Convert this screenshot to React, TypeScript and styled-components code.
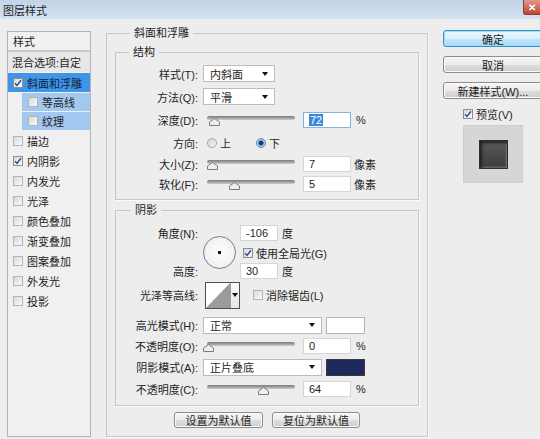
import React from 'react'
import styled, {createGlobalStyle} from 'styled-components'

const GlobalStyle = createGlobalStyle`
  html, body {
    margin: 0;
    padding: 0;
    background: #ededed;
  }
  body {
    font-family: "Liberation Sans", "Noto Sans CJK SC", sans-serif;
    font-size: 11px;
    color: #1e1e1e;
  }
  * {
    box-sizing: border-box;
  }
`

const Window = styled.div`
  width: 540px;
  height: 439px;
  overflow: hidden;
  background: #ededed;
  display: flex;
  flex-direction: column;
`
const TitleBar = styled.div`
  height: 19px;
  flex: none;
  display: flex;
  align-items: center;
  justify-content: space-between;
  padding-left: 3px;
  background: linear-gradient(#c2d4e9, #d5e2f0);
`
const CloseBtn = styled.div`
  width: 17px;
  height: 15px;
  align-self: flex-start;
  display: flex;
  align-items: center;
  justify-content: center;
  color: #fff;
  font-size: 10px;
  font-weight: bold;
  background: linear-gradient(#e0998c, #c4442f);
  border: 1px solid #8d3b30;
  border-top: none;
  border-right: none;
  border-radius: 0 0 0 3px;
`
const Body = styled.div`
  flex: 1;
  display: flex;
  align-items: flex-start;
  padding-left: 7px;
`

/* ---------- left list ---------- */
const LeftPanel = styled.div`
  width: 84px;
  height: 406px;
  margin-top: 12px;
  flex: none;
  display: flex;
  flex-direction: column;
  background: #f0f0f0;
  border: 1px solid #b3b3b3;
`
const PanelHeader = styled.div`
  height: 20px;
  padding-left: 5px;
  display: flex;
  align-items: center;
  border-bottom: 2px solid #c9c9c9;
`
const BlendRow = styled.div`
  height: 20px;
  padding-left: 4px;
  display: flex;
  align-items: center;
  background: #e8e8e8;
`
const StyleItem = styled.div<{$tone?: 'selected' | 'sub'; $h?: number}>`
  height: ${p => p.$h ?? 20}px;
  margin-top: 1px;
  margin-left: ${p => (p.$tone === 'sub' ? 14 : 0)}px;
  padding-left: ${p => (p.$tone === 'sub' ? 6 : 5)}px;
  display: flex;
  align-items: center;
  gap: 4px;
  background: ${p =>
    p.$tone === 'selected' ? '#3f95e6' : p.$tone === 'sub' ? '#a3c8f0' : 'transparent'};
  color: ${p => (p.$tone === 'selected' ? '#0f1f40' : '#1e1e1e')};
`

/* ---------- common controls ---------- */
const CheckBox = styled.span<{$faint?: boolean}>`
  width: 10px;
  height: 10px;
  flex: none;
  display: inline-flex;
  align-items: center;
  justify-content: center;
  border: 1px solid ${p => (p.$faint ? '#b5b5b5' : '#8f8f8f')};
  background: linear-gradient(135deg, #d8d8d8, #fbfbfb);
`
function Check({on, faint}: {on?: boolean; faint?: boolean}) {
  return (
    <CheckBox $faint={faint}>
      {on && (
        <svg width="8" height="8" viewBox="0 0 8 8">
          <path d="M1 4.2 L3 6.4 L7 1.2" fill="none" stroke="#2c4a8c" strokeWidth="1.4" />
        </svg>
      )}
    </CheckBox>
  )
}

const Row = styled.div<{$h: number}>`
  height: ${p => p.$h}px;
  display: flex;
  align-items: center;
`
const Label = styled.div`
  width: 82px;
  flex: none;
  text-align: right;
  white-space: nowrap;
`
const Select = styled.div<{$w: number}>`
  width: ${p => p.$w}px;
  height: 17px;
  margin-left: 5px;
  flex: none;
  display: flex;
  align-items: center;
  justify-content: space-between;
  padding: 0 6px 0 6px;
  background: #fff;
  border: 1px solid #bcbcbc;
`
const Arrow = () => (
  <svg width="6" height="4" viewBox="0 0 6 4">
    <polygon points="0,0 6,0 3,4" fill="#111" />
  </svg>
)
const Input = styled.div<{$w?: number; $ml?: number; $focus?: boolean}>`
  width: ${p => p.$w ?? 48}px;
  height: 16px;
  margin-left: ${p => p.$ml ?? 8}px;
  flex: none;
  display: flex;
  align-items: center;
  padding-left: 5px;
  background: #fff;
  border: 1px solid ${p => (p.$focus ? '#86b3e0' : '#d2d6dc')};
`
const Selected = styled.span`
  background: #3c88d8;
  color: #fff;
  padding: 0 1px;
`
const Unit = styled.span<{$ml?: number}>`
  margin-left: ${p => p.$ml ?? 5}px;
`

const SliderWrap = styled.div`
  position: relative;
  width: 88px;
  height: 14px;
  margin-left: 9px;
  flex: none;
`
const Track = styled.div`
  margin-top: 3px;
  height: 4px;
  border-radius: 2px;
  background: linear-gradient(#7a7a7a, #a8a8a8 60%, #d0d0d0);
`
const Thumb = styled.svg`
  position: absolute;
  top: 5px;
`
function Slider({pct}: {pct: number}) {
  return (
    <SliderWrap>
      <Track />
      <Thumb width="11" height="8" viewBox="0 0 11 8" style={{left: 1 + pct * 0.86 - 5.5}}>
        <polygon points="5.5,0.5 10.5,4 10.5,7.5 0.5,7.5 0.5,4" fill="#efefef" stroke="#7c7c7c" />
      </Thumb>
    </SliderWrap>
  )
}

const Radio = styled.span<{$on?: boolean}>`
  width: 10px;
  height: 10px;
  flex: none;
  border-radius: 50%;
  border: 1px solid ${p => (p.$on ? '#5a86b0' : '#a5a5a5')};
  background: ${p =>
    p.$on
      ? 'radial-gradient(circle, #163a5c 0 1.6px, #3a7fc0 2.2px, #b7d6f0 3.6px, #e8f1f8 5px)'
      : 'linear-gradient(135deg, #d4d4d4, #f7f7f7)'};
`
const RadioGroup = styled.div`
  display: flex;
  align-items: center;
  margin-left: 9px;
`
const RadioLabel = styled.span<{$gap?: number}>`
  margin-left: 3px;
  margin-right: ${p => p.$gap ?? 0}px;
`

/* ---------- group boxes ---------- */
const Middle = styled.div`
  width: 322px;
  margin-left: 15px;
  margin-top: 7px;
  flex: none;
`
const Group = styled.fieldset<{$mt?: number; $pb?: number; $px?: number}>`
  margin: ${p => p.$mt ?? 0}px 0 0 0;
  padding: 0 ${p => p.$px ?? 0}px ${p => p.$pb ?? 5}px;
  min-width: 0;
  border: 1px solid #c7c7c7;
  box-shadow: 1px 1px 0 #fafafa;
`
const Legend = styled.legend<{$ml: number}>`
  margin-left: ${p => p.$ml}px;
  padding: 0 4px;
  line-height: 14px;
  font-size: 11px;
`
const GroupBody = styled.div<{$pt: number}>`
  padding-top: ${p => p.$pt}px;
`

const AngleBlock = styled.div`
  height: 57px;
  display: flex;
`
const Stack = styled.div<{$ml?: number}>`
  display: flex;
  flex-direction: column;
  margin-left: ${p => p.$ml ?? 0}px;
`
const Dial = styled.div`
  width: 33px;
  height: 33px;
  margin-left: 5px;
  margin-top: 14px;
  flex: none;
  border-radius: 50%;
  border: 1.5px solid #6f7f98;
  background: radial-gradient(circle, #111 0 1.5px, #fdfdfd 2px, #eaeaea 100%);
`
const CheckText = styled.span<{$ml?: number}>`
  margin-left: ${p => p.$ml ?? 3}px;
  white-space: nowrap;
`
const Contour = styled.div`
  width: 35px;
  height: 27px;
  margin-left: 7px;
  flex: none;
  display: flex;
  border: 1px solid #4e4e4e;
  background: #fff;
`
const ContourDrop = styled.div`
  flex: 1;
  display: flex;
  align-items: center;
  justify-content: center;
  border-left: 1px solid #9c9c9c;
  background: linear-gradient(#fafafa, #e6e6e6);
`
const Swatch = styled.div<{$color: string}>`
  width: 39px;
  height: 17px;
  margin-left: 4px;
  flex: none;
  background: ${p => p.$color};
  border: 1px solid ${p => (p.$color === '#ffffff' ? '#b5b5b5' : '#3a3a3a')};
`
const ButtonRow = styled.div`
  margin-top: 6px;
  display: flex;
  justify-content: center;
  gap: 9px;
`
const Button = styled.div<{$w?: number; $default?: boolean}>`
  width: ${p => p.$w ?? 100}px;
  height: ${p => (p.$default !== undefined ? 17 : 16)}px;
  flex: none;
  display: flex;
  align-items: center;
  justify-content: center;
  border-radius: 3px;
  border: 1px solid ${p => (p.$default ? '#3b8fc9' : '#8c8c8c')};
  box-shadow: ${p => (p.$default ? 'inset 0 0 0 1px #9fdcfa' : 'inset 0 0 0 1px #fbfbfb')};
  background: ${p =>
    p.$default
      ? 'linear-gradient(#eaf6fd, #d9f0fc 50%, #bee6fd 51%, #a7d9f5)'
      : 'linear-gradient(#f6f6f6, #ebebeb 50%, #dddddd 51%, #cfcfcf)'};
  white-space: nowrap;
`

/* ---------- right column ---------- */
const Right = styled.div`
  width: 100px;
  margin-left: 15px;
  margin-top: 11px;
  flex: none;
  display: flex;
  flex-direction: column;
  gap: 9px;
`
const PreviewRow = styled.div`
  height: 17px;
  margin-top: -3px;
  padding-left: 20px;
  display: flex;
  align-items: center;
`
const PreviewBox = styled.div`
  width: 60px;
  height: 58px;
  margin-left: 20px;
  margin-top: -6px;
  display: flex;
  align-items: center;
  justify-content: center;
  background: #d6d6d6;
  border: 1px solid #cdcdcd;
`
const PreviewTile = styled.div`
  width: 29px;
  height: 29px;
  background: linear-gradient(#5a5a5a, #3c3c3c);
  border: 1px solid #2e2e2e;
  box-shadow: inset 2px 2px 3px #222, inset -1px -1px 2px #777;
`

const effects = [
  {name: '描边'},
  {name: '内阴影', on: true},
  {name: '内发光'},
  {name: '光泽'},
  {name: '颜色叠加'},
  {name: '渐变叠加'},
  {name: '图案叠加'},
  {name: '外发光'},
  {name: '投影'},
]

export default function App() {
  return (
    <Window>
      <GlobalStyle />
      <TitleBar>
        <span>图层样式</span>
        <CloseBtn>✕</CloseBtn>
      </TitleBar>
      <Body>
        <LeftPanel>
          <PanelHeader>样式</PanelHeader>
          <BlendRow>混合选项:自定</BlendRow>
          <StyleItem $tone="selected" $h={19}>
            <Check on />
            斜面和浮雕
          </StyleItem>
          <StyleItem $tone="sub" $h={18}>
            <Check faint />
            等高线
          </StyleItem>
          <StyleItem $tone="sub" $h={18}>
            <Check faint />
            纹理
          </StyleItem>
          {effects.map((e, i) => (
            <StyleItem key={e.name} style={i === 0 ? {marginTop: 1} : {marginTop: 0}}>
              <Check on={e.on} faint={!e.on} />
              {e.name}
            </StyleItem>
          ))}
        </LeftPanel>

        <Middle>
          <Group $px={8} $pb={8}>
            <Legend $ml={15}>斜面和浮雕</Legend>
            <Group $mt={5} $pb={5}>
              <Legend $ml={13}>结构</Legend>
              <GroupBody $pt={3}>
                <Row $h={23}>
                  <Label>样式(T):</Label>
                  <Select $w={72}>
                    内斜面
                    <Arrow />
                  </Select>
                </Row>
                <Row $h={23}>
                  <Label>方法(Q):</Label>
                  <Select $w={72}>
                    平滑
                    <Arrow />
                  </Select>
                </Row>
                <Row $h={23}>
                  <Label>深度(D):</Label>
                  <Slider pct={7} />
                  <Input $focus>
                    <Selected>72</Selected>
                  </Input>
                  <Unit>%</Unit>
                </Row>
                <Row $h={23}>
                  <Label>方向:</Label>
                  <RadioGroup>
                    <Radio />
                    <RadioLabel $gap={25}>上</RadioLabel>
                    <Radio $on />
                    <RadioLabel>下</RadioLabel>
                  </RadioGroup>
                </Row>
                <Row $h={20}>
                  <Label>大小(Z):</Label>
                  <Slider pct={5} />
                  <Input>7</Input>
                  <Unit $ml={3}>像素</Unit>
                </Row>
                <Row $h={20}>
                  <Label>软化(F):</Label>
                  <Slider pct={31} />
                  <Input>5</Input>
                  <Unit $ml={3}>像素</Unit>
                </Row>
              </GroupBody>
            </Group>

            <Group $mt={3} $pb={5}>
              <Legend $ml={15}>阴影</Legend>
              <GroupBody $pt={5}>
                <AngleBlock>
                  <Stack>
                    <Row $h={22}>
                      <Label>角度(N):</Label>
                    </Row>
                    <Row $h={18} />
                    <Row $h={17}>
                      <Label>高度:</Label>
                    </Row>
                  </Stack>
                  <Dial />
                  <Stack>
                    <Row $h={22}>
                      <Input $w={38} $ml={4}>-106</Input>
                      <Unit $ml={4}>度</Unit>
                    </Row>
                    <Row $h={18}>
                      <span style={{width: 7}} />
                      <Check on />
                      <CheckText>使用全局光(G)</CheckText>
                    </Row>
                    <Row $h={17}>
                      <Input $w={38} $ml={4}>30</Input>
                      <Unit $ml={4}>度</Unit>
                    </Row>
                  </Stack>
                </AngleBlock>
                <Row $h={28} style={{marginTop: 2}}>
                  <Label>光泽等高线:</Label>
                  <Contour>
                    <svg width="24" height="25" viewBox="0 0 24 25">
                      <polygon points="0,25 24,0 24,25" fill="#9b9b9b" />
                    </svg>
                    <ContourDrop>
                      <Arrow />
                    </ContourDrop>
                  </Contour>
                  <span style={{width: 13}} />
                  <Check faint />
                  <CheckText>消除锯齿(L)</CheckText>
                </Row>
                <Row $h={20} style={{marginTop: 6}}>
                  <Label>高光模式(H):</Label>
                  <Select $w={119}>
                    正常
                    <Arrow />
                  </Select>
                  <Swatch $color="#ffffff" />
                </Row>
                <Row $h={22}>
                  <Label>不透明度(O):</Label>
                  <Slider pct={0} />
                  <Input>0</Input>
                  <Unit>%</Unit>
                </Row>
                <Row $h={20}>
                  <Label>阴影模式(A):</Label>
                  <Select $w={119}>
                    正片叠底
                    <Arrow />
                  </Select>
                  <Swatch $color="#1f2a5c" />
                </Row>
                <Row $h={23}>
                  <Label>不透明度(C):</Label>
                  <Slider pct={64} />
                  <Input>64</Input>
                  <Unit>%</Unit>
                </Row>
              </GroupBody>
            </Group>

            <ButtonRow>
              <Button $w={89}>设置为默认值</Button>
              <Button $w={88}>复位为默认值</Button>
            </ButtonRow>
          </Group>
        </Middle>

        <Right>
          <Button $default>确定</Button>
          <Button $default={false}>取消</Button>
          <Button $default={false}>新建样式(W)...</Button>
          <PreviewRow>
            <Check on />
            <CheckText>预览(V)</CheckText>
          </PreviewRow>
          <PreviewBox>
            <PreviewTile />
          </PreviewBox>
        </Right>
      </Body>
    </Window>
  )
}
